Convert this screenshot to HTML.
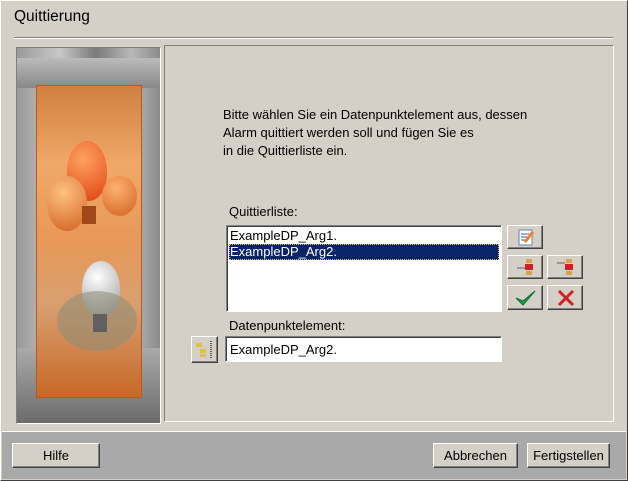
<!DOCTYPE html>
<html><head><meta charset="utf-8"><style>
*{margin:0;padding:0;box-sizing:border-box}
body{width:628px;height:481px;background:#d4d0c8;font-family:"Liberation Sans",sans-serif;font-size:13px;color:#000;position:relative;overflow:hidden}
.abs{position:absolute}
.win{left:0;top:0;width:628px;height:481px;border:1px solid;border-color:#fff #404040 #404040 #fff}
.btn{position:absolute;background:#d4d0c8;border:1px solid;border-color:#fff #404040 #404040 #fff;box-shadow:inset -1px -1px 0 #808080;text-align:center}
.sunk{position:absolute;background:#fff;border:1px solid;border-color:#808080 #fff #fff #808080;box-shadow:inset 1px 1px 0 #404040}
</style></head><body>
<div class="abs win"></div>
<div class="abs" style="left:14px;top:8px;font-size:15.5px">Quittierung</div>
<div class="abs" style="left:14px;top:37px;width:599px;height:2px;border-top:1px solid #808080;border-bottom:1px solid #fff"></div>
<div class="abs" style="left:16px;top:47px;width:145px;height:377px;border:1px solid;border-color:#808080 #fff #fff #808080;background:linear-gradient(90deg,#9a9a9a,#c8c8c8 30%,#7a7a7a 55%,#b8b8b8 80%,#8a8a8a);overflow:hidden">
 <div class="abs" style="left:0;top:10px;width:143px;height:30px;background:linear-gradient(#bbb,#888)"></div>
 <div class="abs" style="left:0;top:300px;width:143px;height:76px;background:linear-gradient(#aaa,#6a6a6a)"></div>
 <div class="abs" style="left:19px;top:37px;width:106px;height:313px;background:linear-gradient(180deg,#d08040,#f0a868 25%,#e89858 50%,#d8a070 70%,#c86828);border:1px solid #b85a20">
  <div class="abs" style="left:30px;top:55px;width:40px;height:60px;border-radius:50% 50% 45% 45%;background:radial-gradient(circle at 40% 30%,#ffa060,#e04010)"></div>
  <div class="abs" style="left:10px;top:90px;width:40px;height:55px;border-radius:50%;background:radial-gradient(circle at 40% 30%,#ffc080,#d06020)"></div>
  <div class="abs" style="left:65px;top:90px;width:35px;height:40px;border-radius:50%;background:radial-gradient(circle at 40% 30%,#ffb070,#d06020)"></div>
  <div class="abs" style="left:45px;top:120px;width:14px;height:18px;background:#a04818"></div>
  <div class="abs" style="left:45px;top:175px;width:38px;height:55px;border-radius:50% 50% 45% 45%;background:radial-gradient(circle at 40% 30%,#fff,#909090)"></div>
  <div class="abs" style="left:20px;top:205px;width:80px;height:60px;border-radius:50%;background:rgba(140,140,120,.55)"></div>
  <div class="abs" style="left:56px;top:228px;width:14px;height:18px;background:#606060"></div>
 </div>
</div>
<div class="abs" style="left:164px;top:45px;width:450px;height:377px;border:1px solid;border-color:#808080 #fff #fff #808080"></div>
<div class="abs" style="left:223px;top:106px;line-height:18px">Bitte wählen Sie ein Datenpunktelement aus, dessen<br>Alarm quittiert werden soll und fügen Sie es<br>in die Quittierliste ein.</div>
<div class="abs" style="left:229px;top:204px">Quittierliste:</div>
<div class="sunk" style="left:226px;top:225px;width:276px;height:87px">
 <div class="abs" style="left:3px;top:2px;line-height:16px">ExampleDP_Arg1.</div>
 <div class="abs" style="left:2px;top:18px;width:270px;height:16px;background:#0a246a;color:#fff;line-height:16px;padding-left:1px;outline:1px dotted #e0c060;outline-offset:-1px">ExampleDP_Arg2.</div>
</div>
<div class="btn" style="left:507px;top:225px;width:36px;height:24px">
<svg width="34" height="22"><rect x="11" y="4" width="13" height="15" fill="#fff" stroke="#6080c0"/><g stroke="#3060c0"><line x1="13" y1="8" x2="21" y2="8"/><line x1="13" y1="11" x2="21" y2="11"/><line x1="13" y1="14" x2="19" y2="14"/></g><line x1="17" y1="16" x2="25" y2="6" stroke="#f08020" stroke-width="3"/></svg></div>
<div class="btn" style="left:507px;top:255px;width:36px;height:24px">
<svg width="34" height="22"><rect x="18" y="3" width="6" height="4" fill="#d8a050"/><rect x="17" y="8" width="8" height="6" fill="#d02020"/><rect x="18" y="15" width="6" height="4" fill="#d8a050"/><line x1="9" y1="12" x2="17" y2="12" stroke="#606060"/></svg></div>
<div class="btn" style="left:547px;top:255px;width:36px;height:24px">
<svg width="34" height="22"><rect x="18" y="3" width="6" height="4" fill="#d8a050"/><rect x="17" y="8" width="8" height="6" fill="#d02020"/><rect x="18" y="15" width="6" height="4" fill="#d8a050"/><line x1="9" y1="7" x2="17" y2="7" stroke="#606060"/></svg></div>
<div class="btn" style="left:507px;top:285px;width:36px;height:25px">
<svg width="34" height="23"><path d="M8 12 L15 19 L27 5 L15 15 Z" fill="#20a040" stroke="#107030"/></svg></div>
<div class="btn" style="left:547px;top:285px;width:36px;height:25px">
<svg width="34" height="23"><path d="M11 5 L25 19 M25 5 L11 19" stroke="#d02020" stroke-width="3"/></svg></div>
<div class="abs" style="left:229px;top:318px">Datenpunktelement:</div>
<div class="btn" style="left:191px;top:336px;width:27px;height:27px">
<svg width="25" height="25"><rect x="4" y="6" width="6" height="4" fill="#e0c040"/><rect x="8" y="12" width="6" height="4" fill="#e0c040"/><rect x="8" y="17" width="6" height="3" fill="#e0c040"/><line x1="19" y1="4" x2="19" y2="21" stroke="#606060" stroke-dasharray="1,1" stroke-width="2"/></svg></div>
<div class="sunk" style="left:225px;top:336px;width:277px;height:26px"><div class="abs" style="left:4px;top:5px">ExampleDP_Arg2.</div></div>
<div class="abs" style="left:2px;top:431px;width:624px;height:48px;background:#a9a9a9;border-top:1px solid #fff"></div>
<div class="btn" style="left:12px;top:443px;width:88px;height:25px;line-height:23px">Hilfe</div>
<div class="btn" style="left:360px;top:443px;width:72px;height:25px;line-height:23px;left:433px;width:85px">Abbrechen</div>
<div class="btn" style="left:527px;top:443px;width:83px;height:25px;line-height:23px">Fertigstellen</div>
</body></html>
